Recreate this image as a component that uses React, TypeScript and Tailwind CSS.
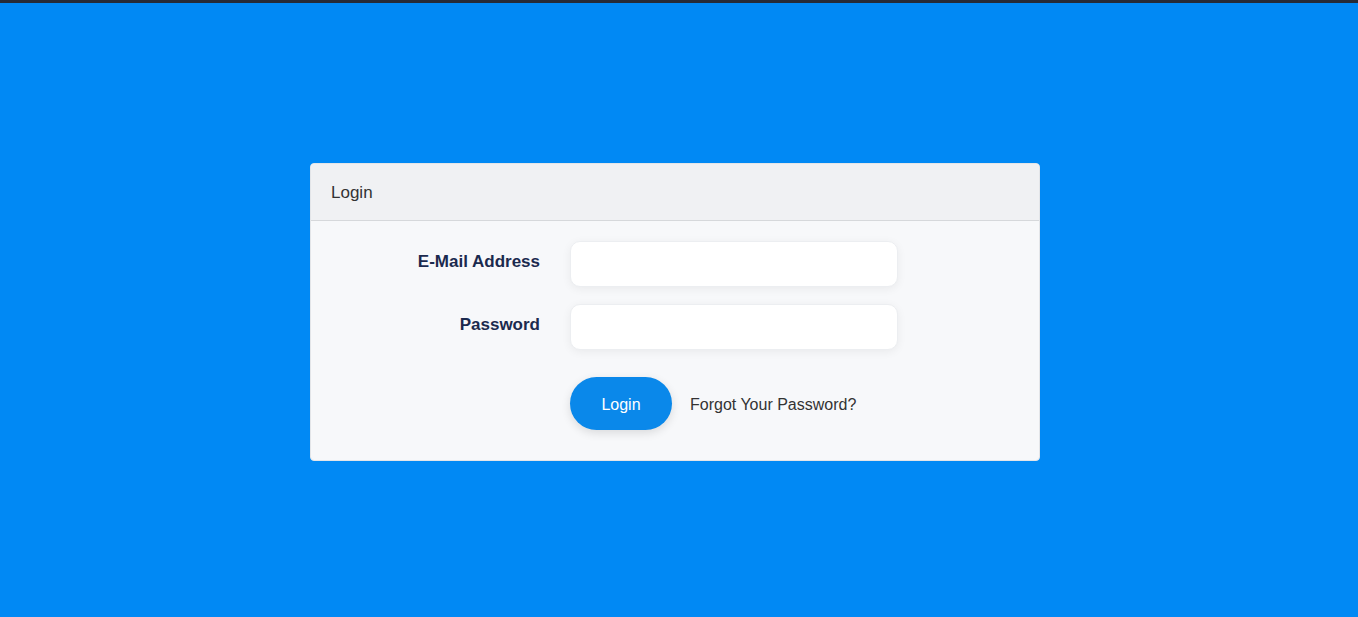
export default function App() {
  return (
    <div
      className="min-h-[617px] bg-[#0189f4]"
      style={{ fontFamily: '"Liberation Sans", Arial, sans-serif' }}
    >
      <div className="h-[3px] bg-[#262b36]" />
      <div className="pl-[310px] pt-[160px]">
        <div className="w-[730px] overflow-hidden rounded-[4px] border border-[#e3e5e8] bg-[#f7f8fa]">
          <div className="flex h-[57px] items-center border-b border-[#d6d8db] bg-[#f0f1f3] px-[20px] pt-[1px] text-[17px] text-[#333]">
            Login
          </div>
          <div className="pt-[20px] pb-[30px]">
            <form className="flex flex-col gap-[17px]">
              <div className="flex items-center">
                <label className="w-[229px] text-right text-[17px] font-bold text-[#1b2a4e] -mt-[5px]">
                  E-Mail Address
                </label>
                <input
                  type="email"
                  className="ml-[30px] h-[46px] w-[328px] rounded-[10px] border border-[#eceef1] bg-white px-3 shadow-[0_2px_10px_rgba(0,0,0,0.06)] outline-none"
                />
              </div>
              <div className="flex items-center">
                <label className="w-[229px] text-right text-[17px] font-bold text-[#1b2a4e] -mt-[5px]">
                  Password
                </label>
                <input
                  type="password"
                  className="ml-[30px] h-[46px] w-[328px] rounded-[10px] border border-[#eceef1] bg-white px-3 shadow-[0_2px_10px_rgba(0,0,0,0.06)] outline-none"
                />
              </div>
              <div className="mt-[10px] flex items-center pl-[259px]">
                <button
                  type="button"
                  className="h-[53px] w-[102px] rounded-full bg-[#0a88ea] pt-[2px] text-[16px] text-white shadow-[0_3px_10px_rgba(0,0,0,0.12)]"
                >
                  Login
                </button>
                <a className="ml-[18px] pt-[2px] text-[16px] text-[#333]">
                  Forgot Your Password?
                </a>
              </div>
            </form>
          </div>
        </div>
      </div>
    </div>
  );
}
